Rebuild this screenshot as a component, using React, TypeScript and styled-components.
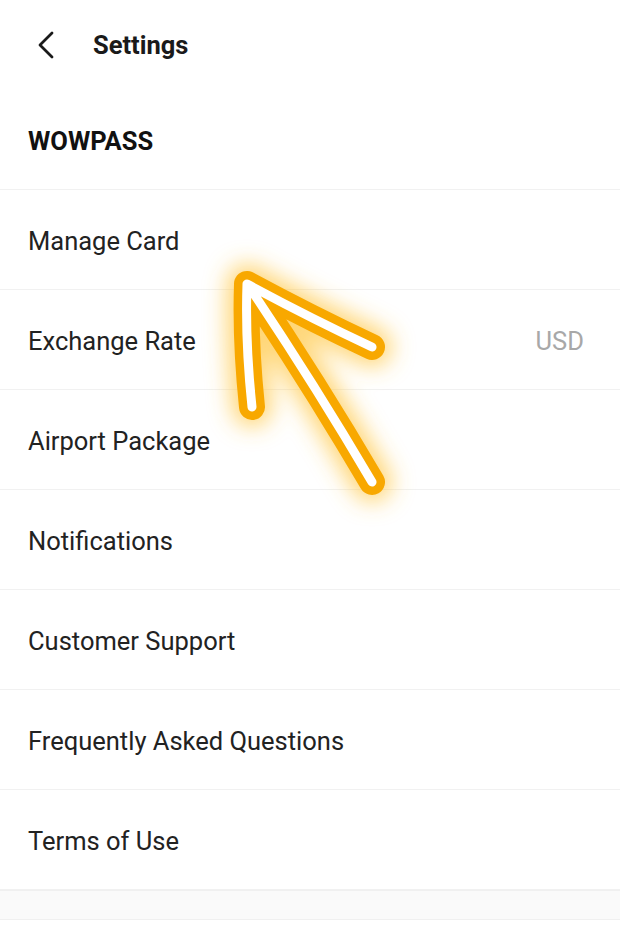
import React from 'react';
import styled, { createGlobalStyle } from 'styled-components';

const GlobalStyle = createGlobalStyle`
  html, body {
    margin: 0;
    padding: 0;
    background: #fff;
  }
  body {
    font-family: Roboto, 'Noto Sans', 'Liberation Sans', sans-serif;
    color: #1f1f1f;
  }
`;

const Page = styled.div`
  position: relative;
  width: 620px;
  height: 930px;
  overflow: hidden;
  background: #fff;
`;

const Header = styled.header`
  height: 90px;
  display: flex;
  align-items: center;
  padding-left: 28px;
  gap: 29px;
`;

const BackButton = styled.button`
  width: 36px;
  height: 36px;
  padding: 0;
  border: none;
  background: none;
  display: flex;
  align-items: center;
  justify-content: center;
`;

const Title = styled.h1`
  margin: 0;
  font-size: 25.5px;
  font-weight: 700;
  color: #1a1a1a;
`;

const SectionTitle = styled.div`
  height: 100px;
  display: flex;
  align-items: center;
  padding: 2px 0 0 28px;
  font-size: 25.5px;
  font-weight: 700;
  color: #111;
  border-bottom: 1px solid #f1f1f1;
  box-sizing: border-box;
`;

const Row = styled.div`
  height: 100px;
  box-sizing: border-box;
  display: flex;
  align-items: center;
  justify-content: space-between;
  padding: 2px 36px 0 28px;
  border-bottom: 1px solid #f1f1f1;
`;

const RowLabel = styled.span`
  font-size: 25.5px;
  color: #222;
`;

const RowValue = styled.span`
  font-size: 25.5px;
  color: #a8a8a8;
`;

const Band = styled.div`
  height: 28px;
  background: #fafafa;
  border-top: 1px solid #f0f0f0;
  border-bottom: 1px solid #f0f0f0;
`;

const ArrowOverlay = styled.svg`
  position: absolute;
  left: 0;
  top: 0;
  pointer-events: none;
`;

const items: { label: string; value?: string }[] = [
  { label: 'Manage Card' },
  { label: 'Exchange Rate', value: 'USD' },
  { label: 'Airport Package' },
  { label: 'Notifications' },
  { label: 'Customer Support' },
  { label: 'Frequently Asked Questions' },
  { label: 'Terms of Use' },
];

const arrowPath =
  'M252 407 Q245 340 247 284 M247 284 Q310 318 372 347 M250 288 Q315 385 372 482';

export default function App() {
  return (
    <Page>
      <GlobalStyle />
      <Header>
        <BackButton aria-label="Back">
          <svg width="24" height="30" viewBox="0 0 24 30">
            <path
              d="M18 3 L6 15 L18 27"
              fill="none"
              stroke="#1a1a1a"
              strokeWidth="2.8"
              strokeLinecap="round"
              strokeLinejoin="round"
            />
          </svg>
        </BackButton>
        <Title>Settings</Title>
      </Header>
      <SectionTitle>WOWPASS</SectionTitle>
      {items.map((it) => (
        <Row key={it.label}>
          <RowLabel>{it.label}</RowLabel>
          {it.value && <RowValue>{it.value}</RowValue>}
        </Row>
      ))}
      <Band />
      <ArrowOverlay width="620" height="930" viewBox="0 0 620 930">
        <defs>
          <filter id="glow" x="-50%" y="-50%" width="200%" height="200%">
            <feGaussianBlur stdDeviation="11" />
          </filter>
        </defs>
        <path
          d={arrowPath}
          fill="none"
          stroke="#ffc640"
          strokeOpacity="0.7"
          strokeWidth="40"
          strokeLinecap="round"
          strokeLinejoin="round"
          filter="url(#glow)"
        />
        <path
          d={arrowPath}
          fill="none"
          stroke="#f8a800"
          strokeWidth="26"
          strokeLinecap="round"
          strokeLinejoin="round"
        />
        <path
          d={arrowPath}
          fill="none"
          stroke="#ffffff"
          strokeWidth="9"
          strokeLinecap="round"
          strokeLinejoin="round"
        />
      </ArrowOverlay>
    </Page>
  );
}
